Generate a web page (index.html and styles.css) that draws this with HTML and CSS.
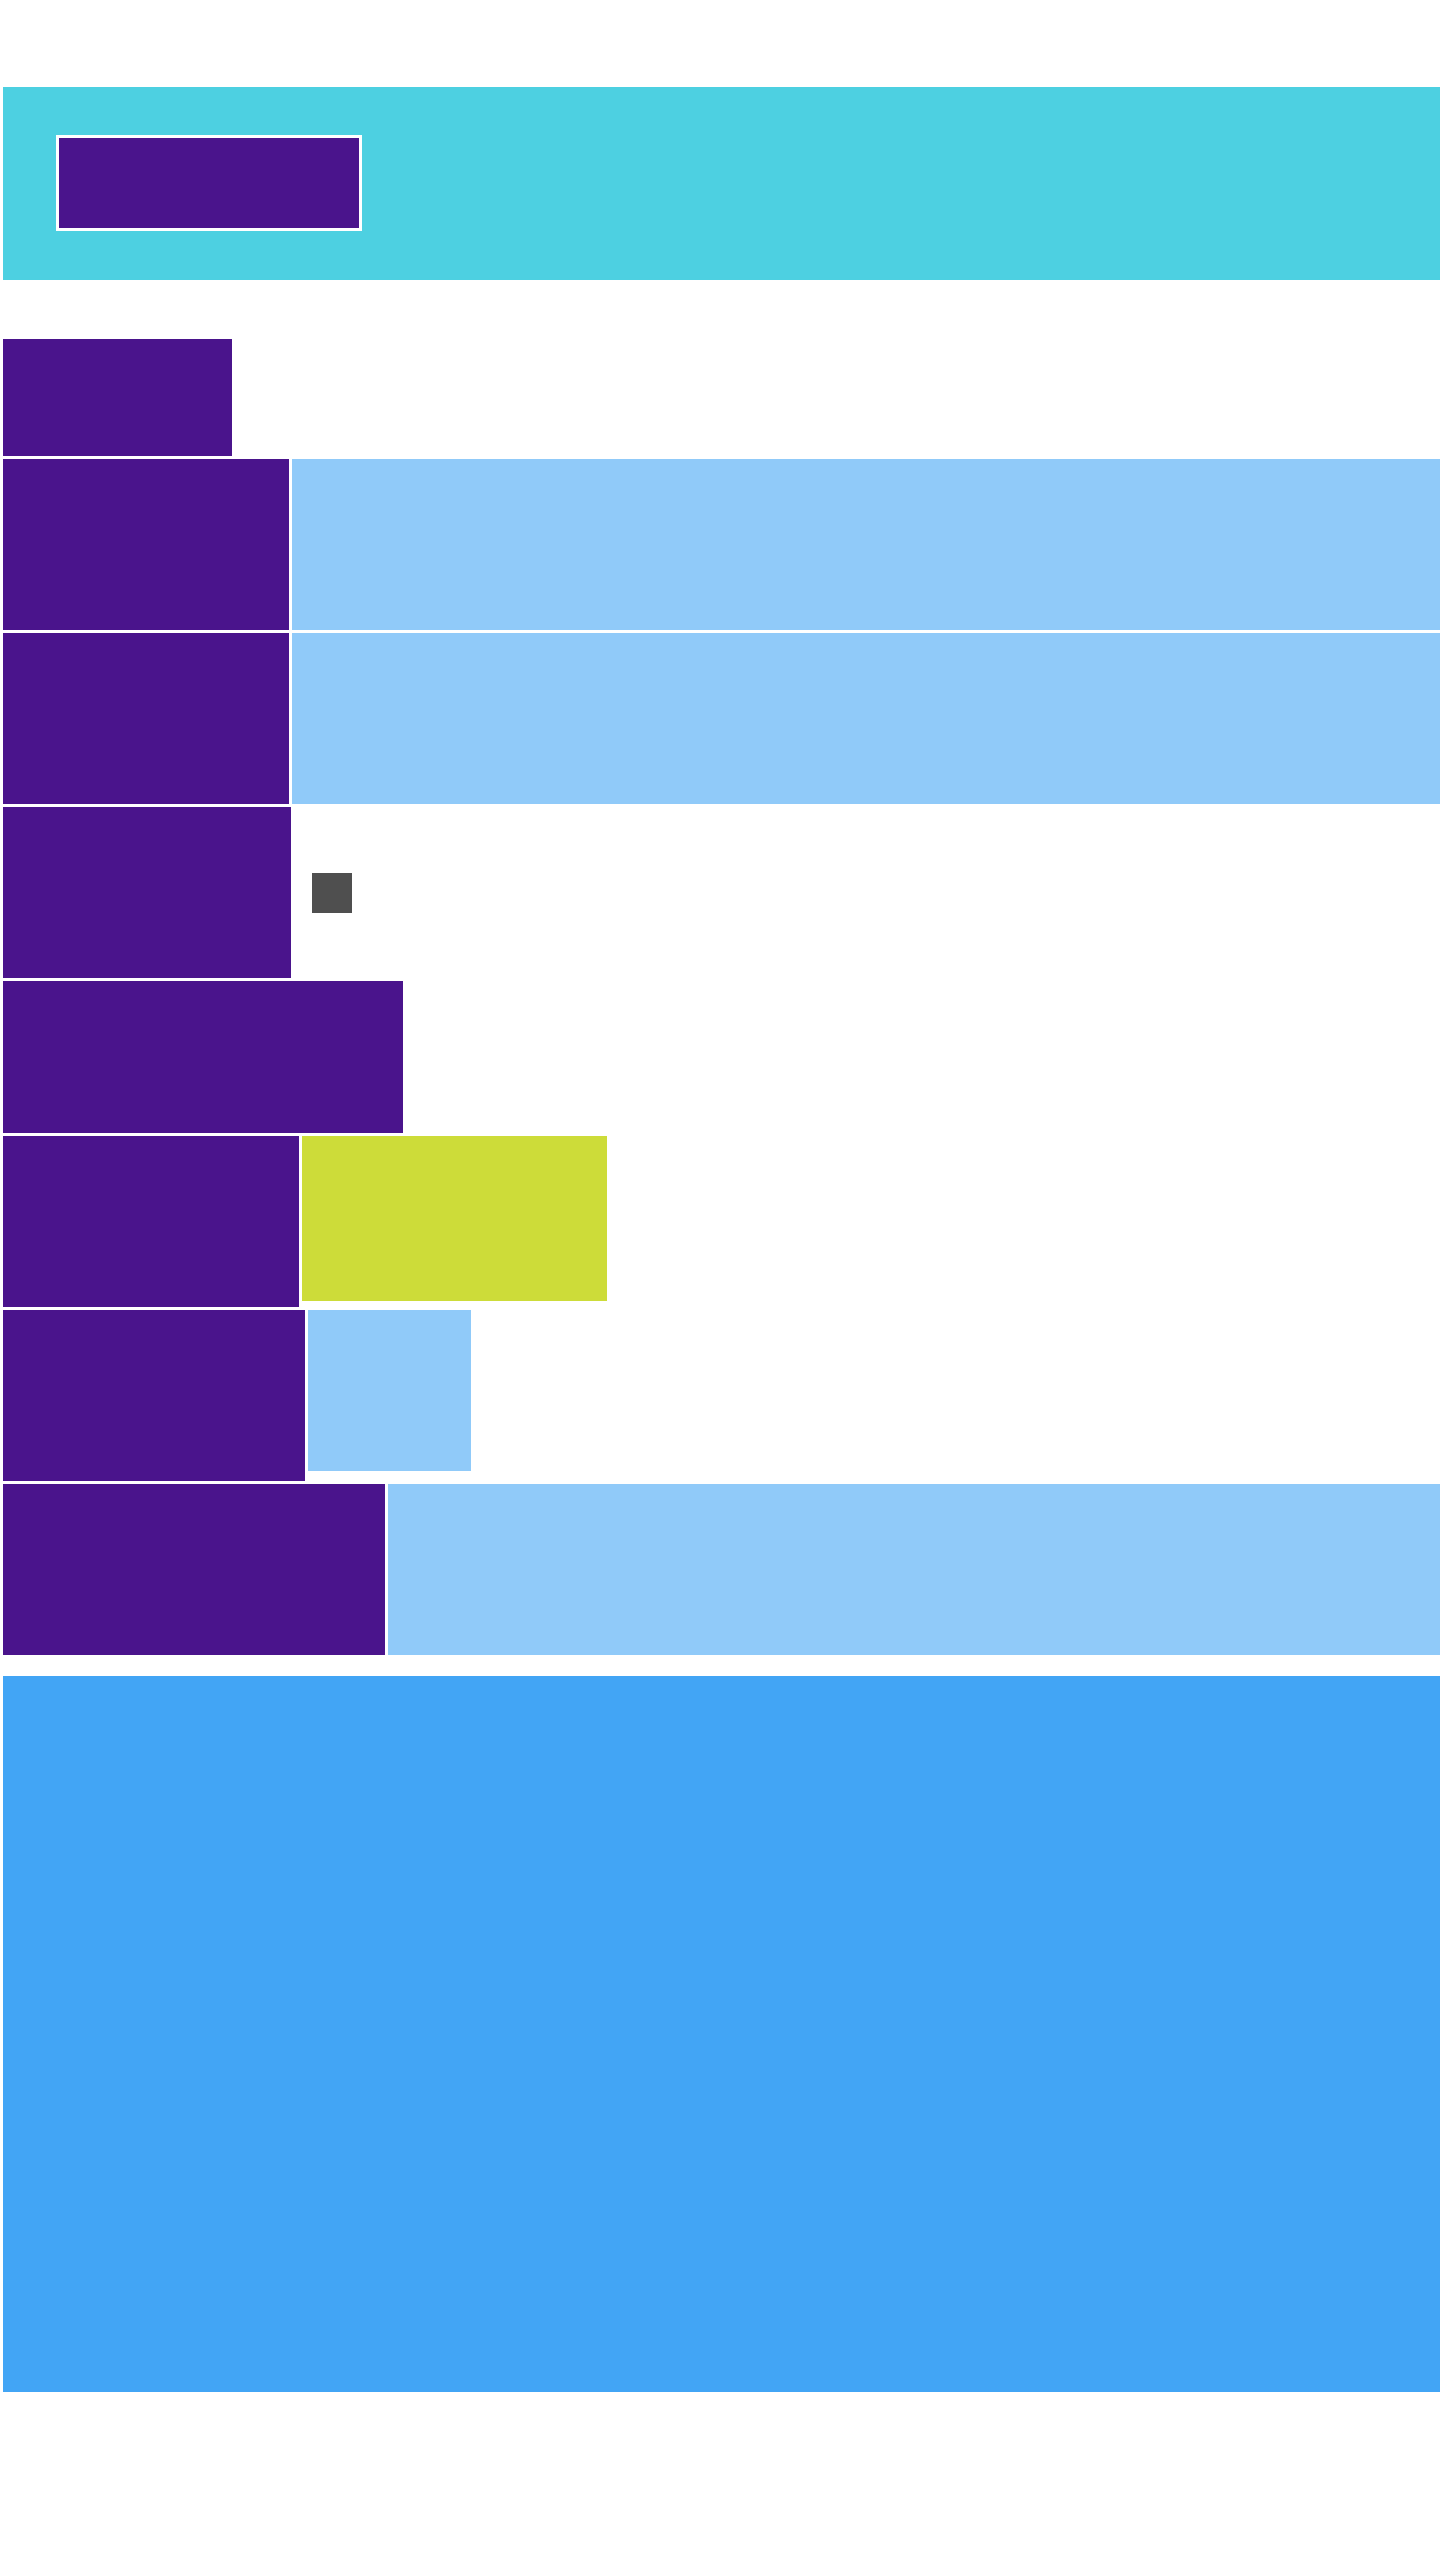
FILE: index.html
```html
<!DOCTYPE html>
<html lang="en">
<head>
    <meta charset="UTF-8">
    <meta name="viewport" content="width=device-width, initial-scale=1.0">
    <title>Profile Form</title>
    <link rel="stylesheet" href="styles.css">
</head>
<body>
<div class="page">
    <!-- Header -->
    <header class="top-bar">
        <div class="brand"></div>
    </header>

    <!-- Form -->
    <main class="form">
        <div class="form-title"></div>

        <div class="row">
            <div class="label w-286"></div>
            <div class="field grow"></div>
        </div>
        <div class="row">
            <div class="label w-286"></div>
            <div class="field grow"></div>
        </div>
        <div class="row">
            <div class="label w-288"></div>
            <div class="check"></div>
        </div>
        <div class="row row-short">
            <div class="label w-400"></div>
        </div>
        <div class="row">
            <div class="label w-296"></div>
            <div class="select"></div>
        </div>
        <div class="row">
            <div class="label w-302"></div>
            <div class="field small"></div>
        </div>
        <div class="row">
            <div class="label w-382"></div>
            <div class="field grow"></div>
        </div>

        <section class="panel"></section>
    </main>
</div>
</body>
</html>
```

FILE: styles.css
```css
/* General Styles */
body {
    font-family: "Liberation Sans", Arial, sans-serif;
    margin: 0;
    padding: 0;
    background: #ffffff;
}
.page {
    padding: 87px 0 0 3px;
}

/* Header */
.top-bar {
    background: #4dd0e1;
    height: 193px;
    padding: 48px 0 0 53px;
    box-sizing: border-box;
}
.brand {
    width: 300px;
    height: 90px;
    background: #4a148c;
    border: 3px solid #ffffff;
}

/* Form rows */
.form {
    margin-top: 59px;
}
.form-title {
    width: 229px;
    height: 117px;
    background: #4a148c;
    margin-bottom: 3px;
}
.row {
    display: flex;
    align-items: flex-start;
    gap: 3px;
    height: 171px;
    margin-bottom: 3px;
}
.row-short {
    height: 152px;
}
.label {
    height: 100%;
    background: #4a148c;
    flex-shrink: 0;
}
.w-286 { width: 286px; }
.w-288 { width: 288px; }
.w-296 { width: 296px; }
.w-302 { width: 302px; }
.w-382 { width: 382px; }
.w-400 { width: 400px; }

.field {
    background: #90caf9;
}
.field.grow {
    flex: 1;
    height: 100%;
}
.field.small {
    width: 163px;
    height: 161px;
}
.select {
    width: 305px;
    height: 165px;
    background: #cddc39;
}
.check {
    width: 40px;
    height: 40px;
    background: #4f4f4f;
    margin-left: 18px;
    align-self: center;
}

/* Bottom panel */
.panel {
    margin-top: 21px;
    height: 716px;
    background: #42a5f5;
}
```
